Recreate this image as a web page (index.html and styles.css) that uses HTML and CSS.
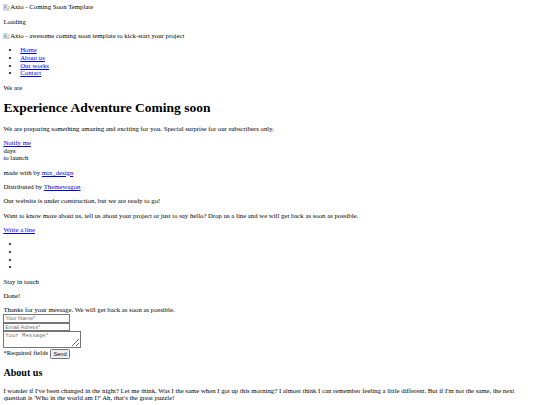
FILE: index.html
```html
<!DOCTYPE html>
<html lang="en">
<head>
    <meta charset="UTF-8">
    <meta name="viewport" content="width=device-width, initial-scale=1.0">
    <title>Axio - Coming Soon Template</title>
    <link rel="stylesheet" href="styles.css">
</head>
<body>
    <div class="logo">
        <svg class="broken-icon" viewBox="0 0 16 16" width="16" height="16"><path d="M1.5 1.5h9l4 4v5l-2-1.5-2 2-2-2-2 2-2-2-3 2z" fill="#f4f4f4" stroke="#8c8c8c"/><rect x="3" y="3" width="6" height="5" fill="#9cc7ea"/><path d="M3 8l2.5-2.5 2 2 1.5-1v1.5z" fill="#4c9e45"/><path d="M1.5 14.5v-1.5l3-2 2 2 2-2 2 2 2-2 2 1.5v2z" fill="#f4f4f4" stroke="#8c8c8c"/></svg>Axio - Coming Soon Template
    </div>

    <p>Loading</p>

    <div class="hero-img">
        <svg class="broken-icon" viewBox="0 0 16 16" width="16" height="16"><path d="M1.5 1.5h9l4 4v5l-2-1.5-2 2-2-2-2 2-2-2-3 2z" fill="#f4f4f4" stroke="#8c8c8c"/><rect x="3" y="3" width="6" height="5" fill="#9cc7ea"/><path d="M3 8l2.5-2.5 2 2 1.5-1v1.5z" fill="#4c9e45"/><path d="M1.5 14.5v-1.5l3-2 2 2 2-2 2 2 2-2 2 1.5v2z" fill="#f4f4f4" stroke="#8c8c8c"/></svg>Axio - awesome coming soon template to kick-start your project
    </div>

    <ul class="main-nav">
        <li><a href="#">Home</a></li>
        <li><a href="#">About us</a></li>
        <li><a href="#">Our works</a></li>
        <li><a href="#">Contact</a></li>
    </ul>

    <p>We are</p>
    <h1>Experience Adventure Coming soon</h1>
    <p>We are preparing something amazing and exciting for you. Special surprise for our subscribers only.</p>

    <div class="countdown">
        <div><a href="#">Notify me</a></div>
        <div>days</div>
        <div>to launch</div>
    </div>

    <p>made with by <a href="#">mix_design</a></p>
    <p>Distributed by <a href="#">Themewagon</a></p>

    <p>Our website is under construction, but we are ready to go!</p>
    <p>Want to know more about us, tell us about your project or just to say hello? Drop us a line and we will get back as soon as possible.</p>
    <p><a href="#">Write a line</a></p>

    <ul class="social">
        <li></li>
        <li></li>
        <li></li>
        <li></li>
    </ul>

    <p>Stay in touch</p>
    <p>Done!</p>
    <div>Thanks for your message. We will get back as soon as possible.</div>

    <form class="contact-form">
        <div><input type="text" class="field" placeholder="Your Name*"></div>
        <div><input type="email" class="field" placeholder="Email Adress*"></div>
        <div><textarea class="field-area" placeholder="Your Message*"></textarea></div>
        <div>*Required fields <button type="button" class="btn-send">Send</button></div>
    </form>

    <h2>About us</h2>
    <p>I wonder if I've been changed in the night? Let me think. Was I the same when I got up this morning? I almost think I can remember feeling a little different. But if I'm not the same, the next question is 'Who in the world am I?' Ah, that's the great puzzle!</p>
</body>
</html>
```

FILE: styles.css
```css
/* page was shot at 1280px wide, scaled down to 540 */
html{
    zoom: 0.421875;
}

body{
    font-family: "Liberation Serif", "Times New Roman", serif;
    font-size: 16px;
    line-height: 18px;
    color: #000;
}

a{
    color: #0000ee;
}

h1{
    line-height: 37px;
}

h2{
    line-height: 27px;
}

.broken-icon{
    width: 16px;
    height: 16px;
    vertical-align: -3px;
}

.field{
    width: 148px;
    font-family: "Liberation Sans", Arial, sans-serif;
    font-size: 13.33px;
    line-height: 15px;
}

.field-area{
    width: 176px;
    font-family: "Liberation Mono", "Courier New", monospace;
    font-size: 13.33px;
    line-height: 15px;
}

.btn-send{
    font-family: "Liberation Sans", Arial, sans-serif;
    font-size: 13.33px;
    line-height: 15px;
}
```
